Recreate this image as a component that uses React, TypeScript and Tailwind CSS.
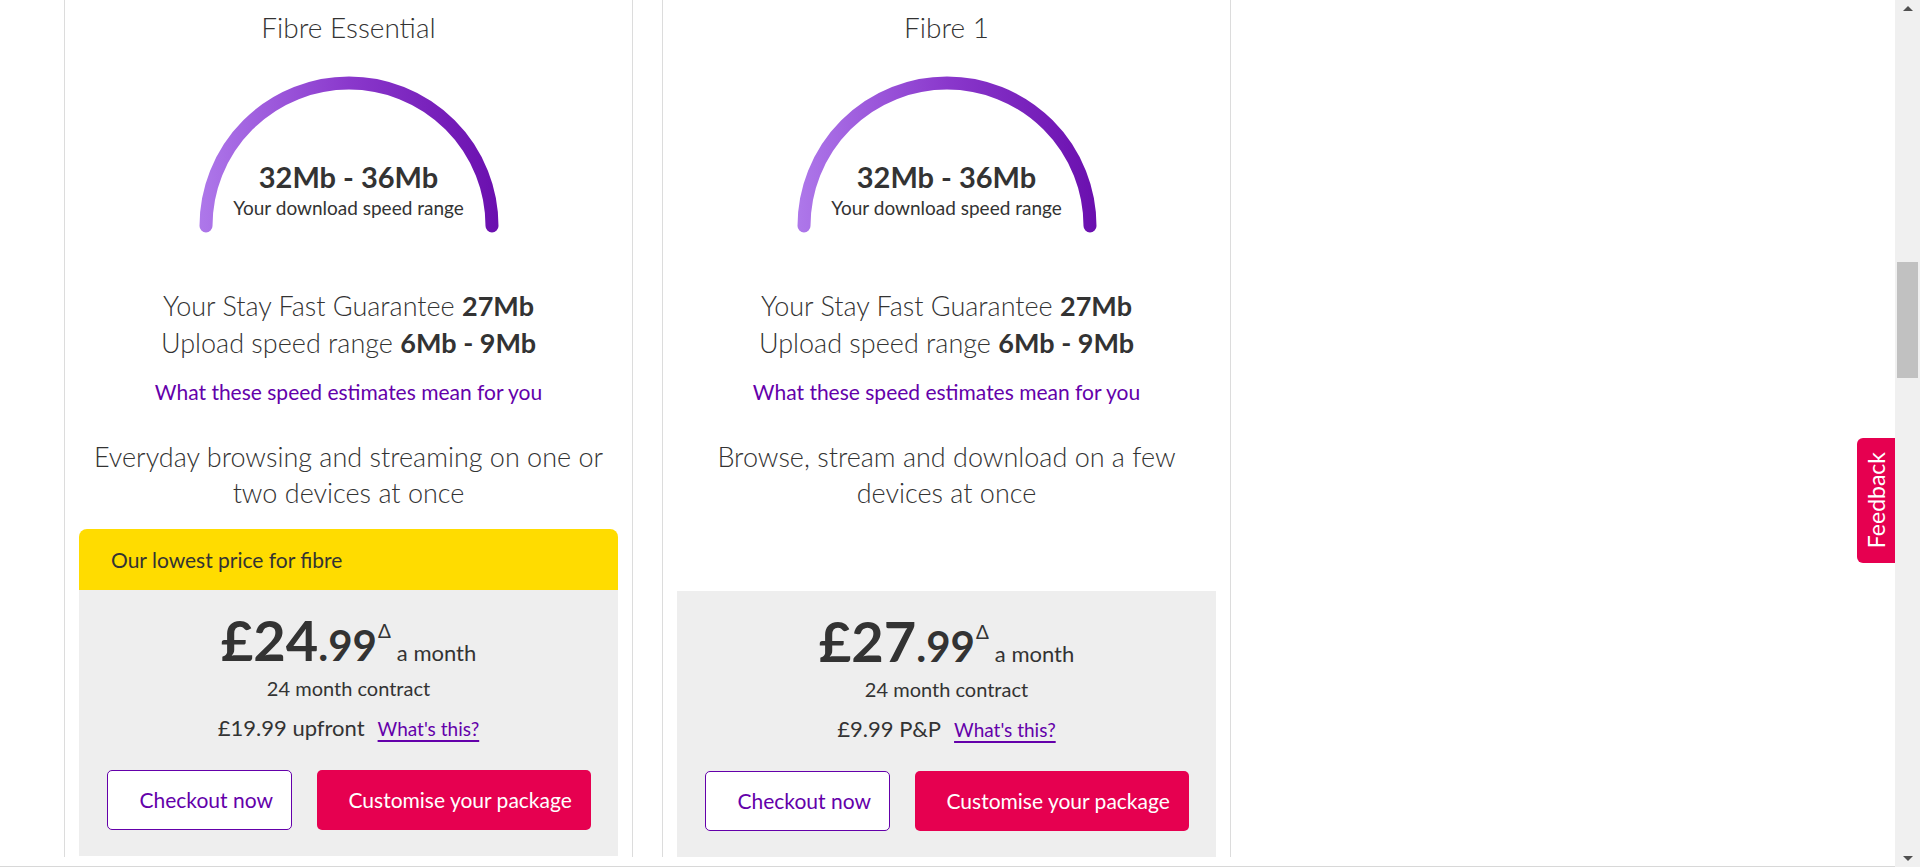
import React from 'react';

type Plan = {
  name: string;
  desc: string[];
  banner?: string;
  pounds: string;
  pence: string;
  extra: string;
};

const plans: Plan[] = [
  {
    name: 'Fibre Essential',
    desc: ['Everyday browsing and streaming on one or', 'two devices at once'],
    banner: 'Our lowest price for fibre',
    pounds: '£24',
    pence: '.99',
    extra: '£19.99 upfront',
  },
  {
    name: 'Fibre 1',
    desc: ['Browse, stream and download on a few', 'devices at once'],
    pounds: '£27',
    pence: '.99',
    extra: '£9.99 P&P',
  },
];

function Gauge({ id }: { id: string }) {
  return (
    <div className="relative mt-[31px] h-[160px] w-[300px]">
      <svg className="absolute inset-0" width="300" height="160" viewBox="0 0 300 160">
        <defs>
          <linearGradient id={id} gradientUnits="userSpaceOnUse" x1="0" y1="0" x2="300" y2="0">
            <stop offset="0" stopColor="#ae78ea" />
            <stop offset="0.5" stopColor="#8a38cc" />
            <stop offset="1" stopColor="#6a0fae" />
          </linearGradient>
        </defs>
        <path
          d="M 7 150 A 143 143 0 0 1 293 150"
          fill="none"
          stroke={`url(#${id})`}
          strokeWidth="13"
          strokeLinecap="round"
        />
      </svg>
      <div className="relative flex flex-col items-center pt-[82px]">
        <div className="text-[29px] font-bold leading-[38px] text-[#333333]">32Mb - 36Mb</div>
        <div className="text-[19px] leading-[24px] text-[#333333]">Your download speed range</div>
      </div>
    </div>
  );
}

function PlanCard({ plan, idx }: { plan: Plan; idx: number }) {
  return (
    <div className="flex w-[569px] flex-col items-center border-x border-[#dcdcdc] px-[14px] pt-[9px]">
      <h2 className="text-[28px] font-light leading-[36px] text-[#333333]">{plan.name}</h2>
      <Gauge id={`gauge-grad-${idx}`} />

      <div className="mt-[51px] text-center text-[27px] font-light leading-[37px] text-[#333333]">
        <div>
          Your Stay Fast Guarantee <span className="font-bold">27Mb</span>
        </div>
        <div>
          Upload speed range <span className="font-bold">6Mb - 9Mb</span>
        </div>
      </div>

      <a className="mt-[17px] text-[21px] leading-[28px] text-[#6400aa]">
        What these speed estimates mean for you
      </a>

      <div className="mt-[33px] text-center text-[27px] font-light leading-[36px] text-[#333333]">
        {plan.desc.map((d) => (
          <div key={d}>{d}</div>
        ))}
      </div>

      {/* banner slot, empty on cards without a tag */}
      <div
        className={
          plan.banner
            ? 'mt-[18px] flex h-[61px] w-full items-center rounded-t-[8px] bg-[#ffdc00] pl-[32px] text-[21px] text-[#333333]'
            : 'mt-[18px] h-[62px] w-full'
        }
      >
        {plan.banner}
      </div>

      <div className="flex h-[266px] w-full flex-col items-center bg-[#eeeeee] pt-[22px]">
        <div className="flex h-[56px] items-baseline leading-none text-[#333333]">
          <span className="text-[56px] font-bold">{plan.pounds}</span>
          <span className="text-[42px] font-bold">{plan.pence}</span>
          <span className="self-start pl-[1px] pt-[9px] text-[19px] leading-[20px]">Δ</span>
          <span className="pl-[6px] text-[22px]">a month</span>
        </div>
        <div className="mt-[6px] text-[20px] leading-[28px] text-[#333333]">24 month contract</div>
        <div className="mt-[12px] flex items-baseline gap-[13px] leading-[28px]">
          <span className="text-[22px] text-[#333333]">{plan.extra}</span>
          <a className="text-[19px] text-[#6400aa] underline decoration-2 underline-offset-4">What's this?</a>
        </div>
        <div className="mt-[27px] flex gap-[25px]">
          <button className="h-[60px] w-[185px] rounded-[5px] border border-[#6400aa] bg-white pl-[32px] text-left text-[21px] text-[#6400aa]">
            Checkout now
          </button>
          <button className="h-[60px] w-[274px] rounded-[5px] bg-[#e60050] pl-[32px] text-left text-[21px] text-white">
            Customise your package
          </button>
        </div>
      </div>
    </div>
  );
}

export default function App() {
  return (
    <div className="flex h-[867px] w-full overflow-hidden bg-white font-['Lato','Liberation_Sans',sans-serif]">
      {/* page */}
      <div className="relative flex-1 border-b border-[#d8d8d8]">
        <div className="flex gap-[29px] pl-[64px]">
          {plans.map((p, i) => (
            <PlanCard key={p.name} plan={p} idx={i} />
          ))}
        </div>

        <button className="absolute right-0 top-[438px] flex h-[125px] w-[38px] items-center justify-center rounded-l-[6px] bg-[#e60050]">
          <span className="rotate-180 text-[23px] leading-none text-white [writing-mode:vertical-rl]">Feedback</span>
        </button>
      </div>

      {/* scrollbar */}
      <div className="flex w-[25px] flex-col items-center bg-[#f0f0f0]">
        <div className="mt-[6px] h-0 w-0 border-x-[5px] border-b-[5px] border-x-transparent border-b-[#505050]" />
        <div className="mt-[251px] h-[116px] w-[21px] bg-[#c1c1c1]" />
        <div className="mt-auto mb-[6px] h-0 w-0 border-x-[5px] border-t-[5px] border-x-transparent border-t-[#505050]" />
      </div>
    </div>
  );
}
